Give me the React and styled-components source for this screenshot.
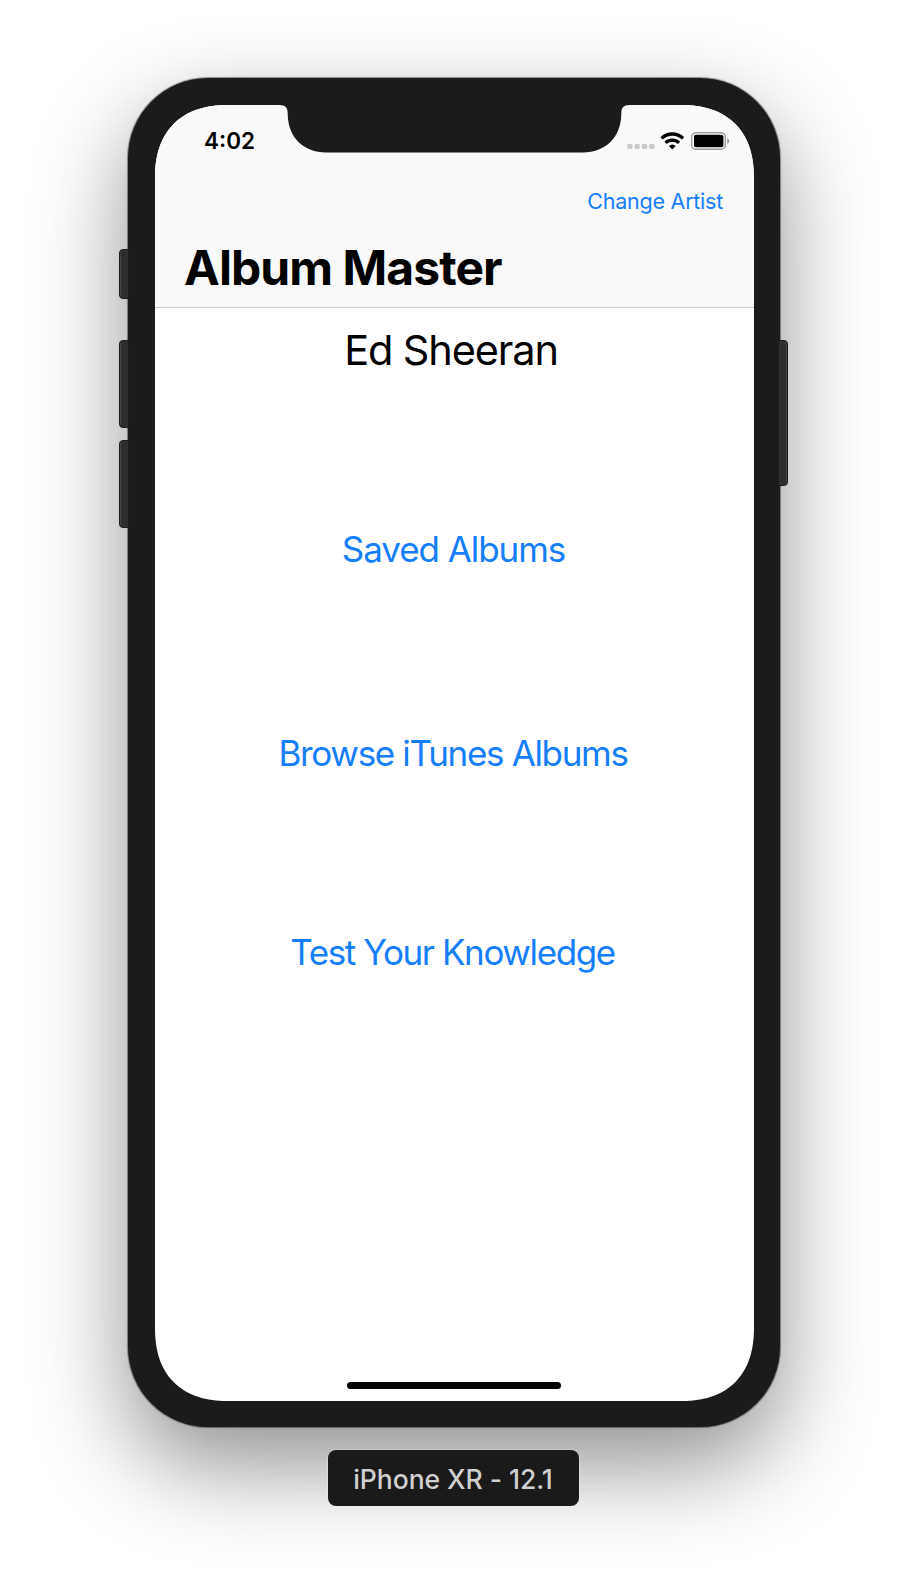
import React from "react";
import styled, { createGlobalStyle } from "styled-components";

const GlobalStyle = createGlobalStyle`
  * { box-sizing: border-box; }
  body { margin: 0; background: #fff; font-family: Inter, "Liberation Sans", sans-serif; }
`;

const Page = styled.main`
  width: 908px;
  height: 1578px;
  overflow: hidden;
  display: flex;
  flex-direction: column;
  align-items: center;
  padding-top: 78px;
`;

const Phone = styled.div`
  position: relative;
  width: 652px;
  height: 1349px;
  padding: 27px 26px 26px 27px;
  flex: none;
  background: #1b1b1b;
  border-radius: 80px;
  box-shadow: 0 0 1px 1px rgba(0, 0, 0, 0.4), 0 38px 95px rgba(0, 0, 0, 0.44);
`;

const SideButton = styled.i`
  position: absolute;
  top: ${(p) => p.$top}px;
  ${(p) => p.$side}: ${(p) => (p.$side === "left" ? "-9.5px" : "-8px")};
  width: 10px;
  height: ${(p) => p.$height}px;
  background: #2e2e2e;
  border: 1px solid #1c1c1c;
  border-radius: ${(p) => (p.$side === "left" ? "4px 0 0 4px" : "0 4px 4px 0")};
  box-shadow: inset ${(p) => (p.$side === "left" ? "1px" : "-1px")} 0 #444;
`;

const Screen = styled.div`
  position: relative;
  height: 1296px;
  display: flex;
  flex-direction: column;
  background: #fff;
  overflow: hidden;
  border-radius: 65px;
  @supports (corner-shape: superellipse(1.24)) {
    border-radius: 74px;
    corner-shape: superellipse(1.24);
  }
`;

const Notch = styled.svg`
  position: absolute;
  top: 0;
  left: 124px;
`;

const Header = styled.header`
  height: 203px;
  flex: none;
  background: #f9f9f9;
  border-bottom: 1px solid #cbcbcb;
`;

const StatusBar = styled.div`
  height: 71px;
  padding: 0 24px 0 49px;
  display: flex;
  align-items: center;
  justify-content: space-between;
`;

const Time = styled.span`
  font-size: 22.5px;
  font-weight: 600;
`;

const Indicators = styled.div`
  display: flex;
  align-items: center;
`;

const Toolbar = styled.div`
  height: 50px;
  padding-right: 31px;
  display: flex;
  justify-content: flex-end;
  align-items: center;
`;

const NavButton = styled.button`
  border: 0;
  padding: 0;
  background: none;
  font: 400 21.5px Inter, sans-serif;
  letter-spacing: -0.24px;
  color: #157efb;
  white-space: nowrap;
`;

const Title = styled.h1`
  margin: 0;
  padding-left: 29px;
  font-size: 48px;
  font-weight: 700;
  line-height: 83px;
  letter-spacing: -0.93px;
`;

const Content = styled.section`
  flex: 1;
  display: flex;
  flex-direction: column;
  align-items: center;
  padding-top: 12px;
`;

const Artist = styled.h2`
  margin: 0;
  padding-right: 7px;
  font-size: 41.5px;
  font-weight: 400;
  line-height: 60px;
  letter-spacing: -1.15px;
`;

const MenuButton = styled.button`
  border: 0;
  padding: 0 ${(p) => p.$inset}px 0 0;
  background: none;
  margin-top: ${(p) => p.$gap}px;
  font: 400 35px/60px Inter, sans-serif;
  letter-spacing: ${(p) => p.$tracking}px;
  color: #157efb;
  white-space: nowrap;
`;

const HomeBar = styled.div`
  align-self: center;
  width: 214px;
  height: 7px;
  margin: 0 1px 12px 0;
  border-radius: 4px;
  background: #000;
`;

const Badge = styled.div`
  margin: 23px 2px 0 0;
  width: 251px;
  height: 56px;
  border-radius: 8px;
  background: #1a1a1a;
  color: #d0d0d0;
  box-shadow: 0 0 1px 1px rgba(255, 255, 255, 0.25);
  font-size: 26.5px;
  font-weight: 450;
  letter-spacing: -0.05px;
  line-height: 58px;
  text-align: center;
  z-index: 1;
`;

const StatusIcons = () => (
  <svg width="104" height="20" viewBox="0 0 104 20">
    <g fill="#c9c9c9">
      {[1.3, 8.6, 15.9, 23.2].map((x) => (
        <rect key={x} x={x} y="12.8" width="5.2" height="5.2" rx="1.5" />
      ))}
    </g>
    <g fill="none" stroke="#000" strokeWidth="3.3">
      <path d="M35.5 7.4A15.5 15.5 0 0 1 57.1 7.4" />
      <path d="M39.6 11.8A9.5 9.5 0 0 1 53 11.8" />
    </g>
    <path d="M42.9 15.1a5 5 0 0 1 6.8 0L46.3 18.6Z" />
    <rect x="65.7" y="1.7" width="33.6" height="16.6" rx="4.2" fill="#fff" stroke="#9c9c9c" strokeWidth="1.4" />
    <rect x="68" y="3.8" width="29.4" height="12.4" rx="1.6" />
    <path d="M101.2 7.3c2.8.7 2.8 5 0 5.7Z" fill="#9c9c9c" />
  </svg>
);

export default function App() {
  return (
    <>
      <GlobalStyle />
      <Page>
        <Phone>
          <SideButton $side="left" $top={171} $height={50} />
          <SideButton $side="left" $top={262} $height={88} />
          <SideButton $side="left" $top={362} $height={88} />
          <SideButton $side="right" $top={262} $height={146} />
          <Screen>
            <Header>
              <StatusBar>
                <Time>4:02</Time>
                <Indicators>
                  <StatusIcons />
                </Indicators>
              </StatusBar>
              <Toolbar>
                <NavButton>Change Artist</NavButton>
              </Toolbar>
              <Title>Album Master</Title>
            </Header>
            <Content>
              <Artist>Ed Sheeran</Artist>
              <MenuButton $gap={139} $tracking={-1.06} $inset={2}>Saved Albums</MenuButton>
              <MenuButton $gap={144} $tracking={-1.33} $inset={3}>Browse iTunes Albums</MenuButton>
              <MenuButton $gap={139} $tracking={-1.4} $inset={4}>Test Your Knowledge</MenuButton>
            </Content>
            <HomeBar />
            <Notch width="352" height="48" viewBox="0 0 352 48">
              <path
                d="M0 0C7 0 8.7 3 8.7 9C9 33 25 47.4 47 47.4H304C326 47.4 342 33 342.3 9C342.3 3 344 0 351 0Z"
                fill="#1b1b1b"
              />
            </Notch>
          </Screen>
        </Phone>
        <Badge>iPhone XR - 12.1</Badge>
      </Page>
    </>
  );
}
